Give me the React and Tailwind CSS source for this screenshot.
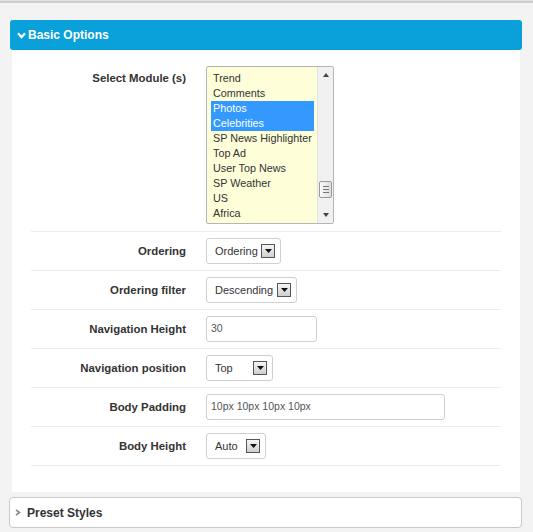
import React from "react";

const modules = [
  "Trend",
  "Comments",
  "Photos",
  "Celebrities",
  "SP News Highlighter",
  "Top Ad",
  "User Top News",
  "SP Weather",
  "US",
  "Africa",
];
const selected = ["Photos", "Celebrities"];

function DropButton() {
  return (
    <span className="flex h-[14px] w-[14px] items-center justify-center border border-[#555] bg-gradient-to-b from-[#f6f6f6] to-[#cfcfcf]">
      <svg width="7" height="4" viewBox="0 0 7 4">
        <polygon points="0,0 7,0 3.5,4" fill="#111" />
      </svg>
    </span>
  );
}

function Select({ value, width }) {
  return (
    <div
      className={`flex h-[26px] items-center justify-between rounded-[3px] border border-[#cfcfcf] bg-white pl-[8px] pr-[5px] text-[11px] text-[#333] ${width}`}
    >
      <span>{value}</span>
      <DropButton />
    </div>
  );
}

function TextInput({ value, width }) {
  return (
    <div
      className={`flex h-[26px] items-center rounded-[3px] border border-[#cfcfcf] bg-white px-[4px] text-[10.5px] text-[#555] ${width}`}
    >
      {value}
    </div>
  );
}

function Row({ label, children, top }) {
  return (
    <div
      className={`flex border-b border-[#ececec] pt-[6px] ${top ? "items-start pb-[7px]" : "items-center pb-[6px]"}`}
    >
      <div
        className={`w-[155px] text-right text-[11.4px] font-bold leading-[12px] text-[#333] ${top ? "pt-[6px]" : "-mt-[1px]"}`}
      >
        {label}
      </div>
      <div className="ml-[20px]">{children}</div>
    </div>
  );
}

function ModuleList() {
  return (
    <div className="flex h-[158px] w-[128px] overflow-hidden rounded-[2px] border border-[#b5b5b5] bg-[#fefed9]">
      <div className="flex-1 pl-[4px] pr-[3px] pt-[4px]">
        {modules.map((m) => {
          const on = selected.includes(m);
          return (
            <div
              key={m}
              className={`h-[15px] whitespace-nowrap pl-[2px] text-[10.8px] leading-[15px] ${on ? "bg-[#3399ff] text-white" : "text-[#333]"}`}
            >
              {m}
            </div>
          );
        })}
      </div>
      <div className="relative w-[16px] border-l border-[#e2e2e2] bg-[#f1f1f1]">
        <svg className="absolute left-[5px] top-[6px]" width="6" height="4" viewBox="0 0 6 4">
          <polygon points="3,0 6,4 0,4" fill="#444" />
        </svg>
        <div className="absolute left-[1px] top-[114px] flex h-[17px] w-[13px] flex-col items-center justify-center gap-[2px] rounded-[2px] border border-[#9a9a9a] bg-gradient-to-r from-[#fafafa] to-[#dedede]">
          <span className="h-px w-[6px] bg-[#777]" />
          <span className="h-px w-[6px] bg-[#777]" />
          <span className="h-px w-[6px] bg-[#777]" />
        </div>
        <svg className="absolute bottom-[6px] left-[5px]" width="6" height="4" viewBox="0 0 6 4">
          <polygon points="0,0 6,0 3,4" fill="#444" />
        </svg>
      </div>
    </div>
  );
}

export default function App() {
  return (
    <div
      className="min-h-[532px] w-[533px] bg-[#f3f3f3]"
      style={{ fontFamily: '"Liberation Sans", Arial, sans-serif' }}
    >
      <div className="h-[1px] bg-[#e2e2e2]" />
      <div className="h-[2px] bg-[#cfcfcf]" />

      <div className="mx-[10px] w-[512px] pt-[17px]">
        {/* Basic Options header */}
        <div className="flex h-[30px] items-center gap-[2px] rounded-[3px] bg-[#0aa0d9] pl-[7px]">
          <svg width="9" height="7" viewBox="0 0 9 7">
            <polyline
              points="1,1.2 4.5,5.2 8,1.2"
              fill="none"
              stroke="#fff"
              strokeWidth="2.2"
            />
          </svg>
          <b className="text-[12px] font-bold text-white">Basic Options</b>
        </div>

        {/* Body */}
        <div className="mx-[2px] bg-white px-[19px] pb-[26px] pt-[10px]">
          <Row label="Select Module (s)" top>
            <ModuleList />
          </Row>
          <Row label="Ordering">
            <Select value="Ordering" width="w-[75px]" />
          </Row>
          <Row label="Ordering filter">
            <Select value="Descending" width="w-[91px]" />
          </Row>
          <Row label="Navigation Height">
            <TextInput value="30" width="w-[111px]" />
          </Row>
          <Row label="Navigation position">
            <Select value="Top" width="w-[67px]" />
          </Row>
          <Row label="Body Padding">
            <TextInput value="10px 10px 10px 10px" width="w-[239px]" />
          </Row>
          <Row label="Body Height">
            <Select value="Auto" width="w-[60px]" />
          </Row>
        </div>

        {/* Preset Styles */}
        <div className="mt-[5px] -ml-[1px] flex h-[31px] items-center gap-[6px] rounded-[4px] border border-[#c9c9c9] bg-white pl-[5px]">
          <svg width="6" height="7" viewBox="0 0 6 7">
            <polyline
              points="1,0.8 4.5,3.5 1,6.2"
              fill="none"
              stroke="#888"
              strokeWidth="1.6"
            />
          </svg>
          <b className="text-[12px] font-bold text-[#333]">Preset Styles</b>
        </div>
      </div>
    </div>
  );
}
